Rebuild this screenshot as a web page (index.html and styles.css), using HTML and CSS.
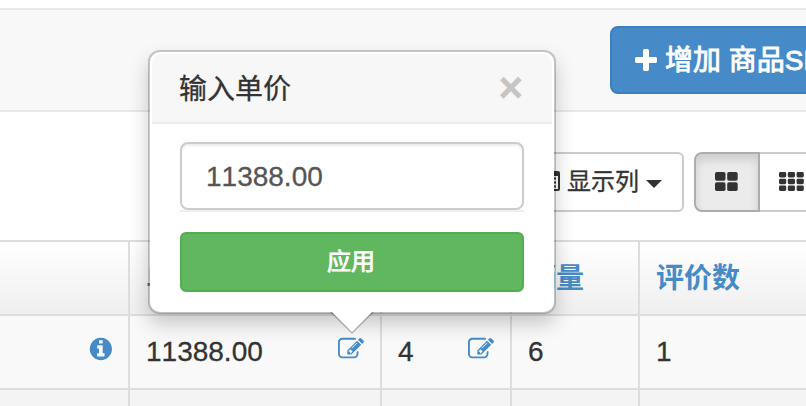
FILE: index.html
```html
<!DOCTYPE html>
<html lang="zh-CN">
<head>
<meta charset="utf-8">
<title>商品SKU</title>
<link rel="stylesheet" href="styles.css">
</head>
<body>
<svg class="sprite" aria-hidden="true">
  <symbol id="edit" viewBox="0 0 1792 1792"><path d="M888 1184l116-116-152-152-116 116v56h96v96h56zm440-720q-16-16-33 1l-350 350q-17 17-1 33t33-1l350-350q17-17 1-33zm80 594v190q0 119-84.5 203.5t-203.5 84.5h-832q-119 0-203.5-84.5t-84.5-203.5v-832q0-119 84.5-203.5t203.5-84.5h832q63 0 117 25 15 7 18 23 3 17-9 29l-49 49q-14 14-32 8-23-6-45-6h-832q-66 0-113 47t-47 113v832q0 66 47 113t113 47h832q66 0 113-47t47-113v-126q0-13 9-22l64-64q15-15 35-7t20 29zm-96-738l288 288-672 672h-288v-288zm444 132l-92 92-288-288 92-92q28-28 68-28t68 28l152 152q28 28 28 68t-28 68z"/></symbol>
</svg>
<header class="navbar">
  <button class="btn btn-primary">
    <svg class="icon-plus" viewBox="0 0 1792 1792"><path d="M1600 736v192q0 40-28 68t-68 28h-416v416q0 40-28 68t-68 28h-192q-40 0-68-28t-28-68v-416h-416q-40 0-68-28t-28-68v-192q0-40 28-68t68-28h416v-416q0-40 28-68t68-28h192q40 0 68 28t28 68v416h416q40 0 68 28t28 68z"/></svg>
    <span>增加 商品SKU</span>
  </button>
</header>
<div class="toolbar">
  <button class="btn btn-default columns">
    <svg class="icon-list" viewBox="0 0 24 20"><path fill-rule="evenodd" d="M2 0h20a2 2 0 0 1 2 2v16a2 2 0 0 1-2 2H2a2 2 0 0 1-2-2V2a2 2 0 0 1 2-2zM2 5v13h20V5zM4 6.500h3v2H4zm5 0h11v2H9zM4 10.500h3v2H4zm5 0h11v2H9zM4 14.500h3v2H4zm5 0h11v2H9z"/></svg>
    <span>显示列</span>
    <i class="caret"></i>
  </button>
  <div class="btn-group">
    <button class="btn btn-default active">
      <svg width="23" height="19" viewBox="0 0 23 19"><rect width="10.500" height="8.800" rx="1.800"/><rect x="12.200" width="10.500" height="8.800" rx="1.800"/><rect y="10.200" width="10.500" height="8.800" rx="1.800"/><rect x="12.200" y="10.200" width="10.500" height="8.800" rx="1.800"/></svg>
    </button>
    <button class="btn btn-default">
      <svg width="25" height="19" viewBox="0 0 25 19"><rect width="7.200" height="5.400" rx="1.400"/><rect x="8.800" width="7.200" height="5.400" rx="1.400"/><rect x="17.600" width="7.200" height="5.400" rx="1.400"/><rect y="6.850" width="7.200" height="5.400" rx="1.400"/><rect x="8.800" y="6.850" width="7.200" height="5.400" rx="1.400"/><rect x="17.600" y="6.850" width="7.200" height="5.400" rx="1.400"/><rect y="13.600" width="7.200" height="5.400" rx="1.400"/><rect x="8.800" y="13.600" width="7.200" height="5.400" rx="1.400"/><rect x="17.600" y="13.600" width="7.200" height="5.400" rx="1.400"/></svg>
    </button>
  </div>
</div>
<div class="grid">
  <div class="row head">
    <div class="cell"></div>
    <div class="cell">单价</div>
    <div class="cell"></div>
    <div class="cell">销量</div>
    <div class="cell">评价数</div>
  </div>
  <div class="row">
    <div class="cell end"><svg class="icon" viewBox="-128 0 1792 1792"><path d="M1152 1376v-160q0-14-9-23t-23-9h-96v-512q0-14-9-23t-23-9h-320q-14 0-23 9t-9 23v160q0 14 9 23t23 9h96v320h-96q-14 0-23 9t-9 23v160q0 14 9 23t23 9h448q14 0 23-9t9-23zm-128-896v-160q0-14-9-23t-23-9h-192q-14 0-23 9t-9 23v160q0 14 9 23t23 9h192q14 0 23-9t9-23zm640 416q0 209-103 385.500t-279.500 279.500-385.500 103-385.500-103-279.500-279.500-103-385.500 103-385.500 279.500-279.500 385.500-103 385.500 103 279.500 279.500 103 385.500z"/></svg></div>
    <div class="cell"><span>11388.00</span><svg class="icon"><use href="#edit"/></svg></div>
    <div class="cell"><span>4</span><svg class="icon"><use href="#edit"/></svg></div>
    <div class="cell"><span>6</span></div>
    <div class="cell"><span>1</span></div>
  </div>
  <div class="row alt">
    <div class="cell"></div>
    <div class="cell"></div>
    <div class="cell"></div>
    <div class="cell"></div>
    <div class="cell"></div>
  </div>
</div>
<div class="popover">
  <div class="popover-title"><span>输入单价</span><span class="close">×</span></div>
  <div class="popover-content">
    <div class="field"><input type="text" value="11388.00"></div>
    <button class="btn btn-success">应用</button>
  </div>
  <svg class="arrow" width="44" height="22" viewBox="0 0 44 22"><path class="arrow-edge" d="M0 0H44L22 22z"/><path class="arrow-fill" d="M2 0H42L22 20z"/></svg>
</div>
</body>
</html>
```
FILE: styles.css
```css
* { box-sizing: border-box; }
body {
  margin: 0;
  padding-top: 8px;
  width: 806px;
  height: 406px;
  overflow: hidden;
  position: relative;
  background: #fff;
  color: #333;
  font: 28px/40px "Liberation Sans", "Noto Sans CJK SC", sans-serif;
  font-kerning: none;
  -webkit-text-stroke: .3px currentColor;
}
svg { display: block; flex: none; fill: currentColor; }
.sprite { display: none; }
.navbar {
  height: 104px;
  padding: 16px 0 0 610px;
  background: #f8f8f8;
  border: solid #e7e7e7;
  border-width: 2px 0;
}
.btn {
  display: flex;
  align-items: center;
  margin: 0;
  border: 2px solid #ccc;
  border-radius: 6px;
  font: inherit;
  font-kerning: none;
  color: #333;
  background: #fff;
  white-space: nowrap;
}
.btn-primary {
  width: 256px;
  height: 68px;
  padding: 2px 20px 0;
  gap: 5px;
  border-color: #3a80c0;
  border-radius: 8px;
  background: #468bc8;
  color: #fff;
  -webkit-text-stroke: .9px #fff;
}
.icon-plus { width: 28px; height: 28px; }
.toolbar {
  display: flex;
  gap: 10px;
  height: 128px;
  padding: 40px 0 0 510px;
}
.toolbar .btn { height: 60px; font-size: 24px; }
.columns { width: 174px; padding: 0 20px; }
.icon-list { width: 24px; height: 20px; margin: 0 7px 2px 4px; }
.caret {
  flex: none;
  margin: 3px 0 0 7px;
  border: 8px solid transparent;
  border-top-color: #333;
  border-bottom: 0;
}
.btn-group { display: flex; }
.btn-group .btn { flex: none; width: 66px; padding: 0 0 2px 19px; border-radius: 8px 0 0 8px; }
.btn-group .btn + .btn { border-left: 0; border-radius: 0; }
.btn-group .active { border-color: #adadad; background: #ebebeb; box-shadow: inset 0 6px 10px rgba(0,0,0,.125); }
.grid { border-top: 2px solid #ddd; }
.row {
  display: grid;
  grid-template-columns: 130px 252px 130px 128px 1fr;
  height: 74px;
  border-bottom: 2px solid #ddd;
  background: #f9f9f9;
}
.row.alt { background: #f4f4f4; }
.row.head { background: linear-gradient(#fff, #efefef); color: #468bc8; font-weight: bold; -webkit-text-stroke: 0; }
.row.head .cell { padding-top: 2px; }
.row.head { height: 74px; }
.cell {
  display: flex;
  align-items: center;
  justify-content: space-between;
  padding: 0 16px;
  border-right: 2px solid #ddd;
}
.cell:last-child { border-right: 0; }
.end { justify-content: flex-end; }
.icon { width: 26px; height: 26px; margin-bottom: 6px; color: #468bc8; }
.popover {
  position: absolute;
  left: 148px;
  top: 50px;
  width: 408px;
  height: 264px;
  padding: 2px;
  border: 2px solid rgba(0,0,0,.2);
  border-radius: 12px;
  background: #fff;
  background-clip: padding-box;
  box-shadow: 0 10px 20px rgba(0,0,0,.2);
}
.popover-title {
  display: flex;
  justify-content: space-between;
  align-items: center;
  height: 70px;
  padding: 3px 29px 0 27px;
  border-bottom: 2px solid #ebebeb;
  border-radius: 10px 10px 0 0;
  background: #f7f7f7;
}
.close { margin-bottom: 4px; color: #c5c5c5; font-size: 42px; font-weight: bold; }
.popover-content { padding: 18px 28px; }
.field { height: 70px; margin-bottom: 20px; border-bottom: 2px solid #eee; }
input {
  display: block;
  width: 100%;
  height: 68px;
  padding: 2px 24px 0;
  border: 2px solid #ccc;
  border-radius: 8px;
  background: #fff;
  box-shadow: inset 0 2px 2px rgba(0,0,0,.075);
  color: #555;
  font: inherit;
  font-kerning: none;
  -webkit-text-stroke: .3px #555;
}
.btn-success {
  width: 100%;
  height: 60px;
  padding: 0 2px 0 0;
  justify-content: center;
  border-color: #50ad50;
  background: #60b760;
  color: #fff;
  font-size: 24px;
  -webkit-text-stroke: .8px #fff;
}
.arrow { position: absolute; left: 180px; top: 260px; }
.arrow-edge { fill: rgba(0,0,0,.25); }
.arrow-fill { fill: #fff; }
```
